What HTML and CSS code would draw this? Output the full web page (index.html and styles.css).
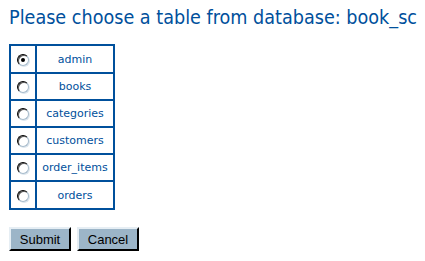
FILE: index.html
```html
<!DOCTYPE html>
<html>
<head>
<meta charset="utf-8">
<link rel="stylesheet" href="styles.css">
</head>
<body>
<h1 class="title">Please choose a table from database: book_sc</h1>
<form class="chooser">
<table class="tables">
<tr><td class="pick"><input type="radio" name="t" class="radio" checked></td><td class="name">admin</td></tr>
<tr><td class="pick"><input type="radio" name="t" class="radio"></td><td class="name">books</td></tr>
<tr><td class="pick"><input type="radio" name="t" class="radio"></td><td class="name">categories</td></tr>
<tr><td class="pick"><input type="radio" name="t" class="radio"></td><td class="name">customers</td></tr>
<tr><td class="pick"><input type="radio" name="t" class="radio"></td><td class="name">order_items</td></tr>
<tr><td class="pick"><input type="radio" name="t" class="radio"></td><td class="name">orders</td></tr>
</table>
<div class="actions">
<button type="button" class="btn">Submit</button>
<button type="button" class="btn">Cancel</button>
</div>
</form>
</body>
</html>
```
FILE: styles.css
```css
html, body { background: #ffffff; }
body {
  margin: 0;
  padding: 0 9px;
  font-family: "DejaVu Sans", Verdana, sans-serif;
  color: #00509c;
}
.title {
  margin: 0;
  padding-top: 7px;
  font-family: "DejaVu Sans Condensed", "DejaVu Sans", sans-serif;
  font-stretch: condensed;
  font-size: 19.6px;
  font-weight: normal;
  line-height: 22px;
  white-space: nowrap;
  color: #00509c;
}
.chooser { margin: 0; padding-top: 15px; }
.tables {
  border: 1px solid #00509c;
  border-spacing: 0;
}
.tables td {
  border: 1px solid #00509c;
  height: 25px;
  padding: 0;
  font-size: 11px;
  text-align: center;
}
.tables tr:first-child td { height: 26px; }
.tables tr:last-child td { height: 26px; }
.pick { width: 24px; }
.name { width: 76px; }
.radio {
  appearance: none;
  -webkit-appearance: none;
  margin: 1px 0 0 0;
  width: 12px;
  height: 12px;
  border-radius: 50%;
  box-sizing: border-box;
  border: 1px solid #000;
  border-right-color: #a8bccc;
  border-bottom-color: #a8bccc;
  background: #fff;
  box-shadow: inset 1px 1px 0 #555, 1px 1px 0 #dde6ee;
  position: relative;
  vertical-align: middle;
}
.radio:checked::after {
  content: "";
  position: absolute;
  left: 3px;
  top: 3px;
  width: 4px;
  height: 4px;
  border-radius: 50%;
  background: #000;
}
.actions {
  padding-top: 17px;
  display: flex;
  gap: 6px;
}
.btn {
  font-family: "Liberation Sans", Arial, sans-serif;
  font-size: 13px;
  color: #000;
  background: #9cb5c8;
  border: 2px solid;
  border-color: #e6eef4 #000 #000 #e6eef4;
  height: 24px;
  width: 62px;
  padding: 0;
  margin: 0;
}
```
